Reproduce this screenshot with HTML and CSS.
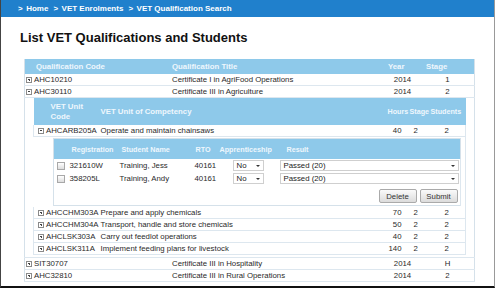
FILE: index.html
```html
<!DOCTYPE html>
<html>
<head>
<title>List VET Qualifications and Students</title>
<link rel="stylesheet" href="styles.css">
</head>
<body>
<div class="frame">

<div class="crumbs"><span class="sep first">&gt;</span>Home<span class="sep">&gt;</span>VET Enrolments<span class="sep">&gt;</span>VET Qualification Search</div>

<h1>List VET Qualifications and Students</h1>

<table class="quals">
  <tr>
    <th class="qCode">Qualification Code</th>
    <th class="qTitle">Qualification Title</th>
    <th class="qYear">Year</th>
    <th class="qStage">Stage</th>
  </tr>
  <tr>
    <td class="code"><span class="tg plus"></span>AHC10210</td>
    <td class="title">Certificate I in AgriFood Operations</td>
    <td class="mid">2014</td>
    <td class="mid">1</td>
  </tr>
  <tr>
    <td class="code"><span class="tg"></span>AHC30110</td>
    <td class="title">Certificate III in Agriculture</td>
    <td class="mid">2014</td>
    <td class="mid">2</td>
  </tr>
  <tr>
    <td class="open" colspan="4">

      <table class="units">
        <tr>
          <th class="uCode">VET Unit<br>Code</th>
          <th class="uName">VET Unit of Competency</th>
          <th class="uHours">Hours</th>
          <th class="uStage">Stage</th>
          <th class="uStudents">Students</th>
        </tr>
        <tr>
          <td class="code"><span class="tg"></span>AHCARB205A</td>
          <td>Operate and maintain chainsaws</td>
          <td class="hours">40</td>
          <td class="stage">2</td>
          <td class="mid">2</td>
        </tr>
        <tr>
          <td class="students" colspan="5">

            <table class="stud">
              <tr>
                <th class="sCheck"></th>
                <th class="sReg">Registration</th>
                <th class="sName">Student Name</th>
                <th class="sRto">RTO</th>
                <th class="sApp">Apprenticeship</th>
                <th class="sResult">Result</th>
              </tr>
              <tr>
                <td><span class="check"></span></td>
                <td class="reg">321610W</td>
                <td class="reg">Training, Jess</td>
                <td class="rto">40161</td>
                <td><div class="sel selNo">No</div></td>
                <td><div class="sel selResult">Passed (20)</div></td>
              </tr>
              <tr>
                <td><span class="check"></span></td>
                <td class="reg">358205L</td>
                <td class="reg">Training, Andy</td>
                <td class="rto">40161</td>
                <td><div class="sel selNo">No</div></td>
                <td><div class="sel selResult">Passed (20)</div></td>
              </tr>
              <tr>
                <td class="actions" colspan="6">
                  <div class="btns">
                    <button type="button">Delete</button>
                    <button type="button">Submit</button>
                  </div>
                </td>
              </tr>
            </table>

          </td>
        </tr>
        <tr>
          <td class="code"><span class="tg plus"></span>AHCCHM303A</td>
          <td>Prepare and apply chemicals</td>
          <td class="hours">70</td>
          <td class="stage">2</td>
          <td class="mid">2</td>
        </tr>
        <tr>
          <td class="code"><span class="tg plus"></span>AHCCHM304A</td>
          <td>Transport, handle and store chemicals</td>
          <td class="hours">50</td>
          <td class="stage">2</td>
          <td class="mid">2</td>
        </tr>
        <tr>
          <td class="code"><span class="tg plus"></span>AHCLSK303A</td>
          <td>Carry out feedlot operations</td>
          <td class="hours">40</td>
          <td class="stage">2</td>
          <td class="mid">2</td>
        </tr>
        <tr>
          <td class="code"><span class="tg plus"></span>AHCLSK311A</td>
          <td>Implement feeding plans for livestock</td>
          <td class="hours">140</td>
          <td class="stage">2</td>
          <td class="mid">2</td>
        </tr>
      </table>

    </td>
  </tr>
  <tr>
    <td class="code"><span class="tg plus"></span>SIT30707</td>
    <td class="title">Certificate III in Hospitality</td>
    <td class="mid">2014</td>
    <td class="mid">H</td>
  </tr>
  <tr>
    <td class="code"><span class="tg plus"></span>AHC32810</td>
    <td class="title">Certificate III in Rural Operations</td>
    <td class="mid">2014</td>
    <td class="mid">2</td>
  </tr>
</table>

</div>
</body>
</html>
```

FILE: styles.css
```css
body {
  margin: 0;
  font-family: "Liberation Sans", Arial, sans-serif;
  color: #2a2a2a;
}
.frame {
  width: 495px;
  height: 288px;
  box-sizing: border-box;
  border-left: 1px solid #444444;
  border-right: 1px solid #999999;
  border-bottom: 2px solid #111111;
  overflow: hidden;
}
.crumbs {
  height: 17px;
  line-height: 17px;
  padding-left: 17px;
  background-color: #2080cc;
  color: #FFFFFF;
  font-size: 8px;
  font-weight: bold;
  white-space: nowrap;
}
.crumbs .sep {
  margin: 0 3.5px 0 5px;
}
.crumbs .first {
  margin-left: 0;
}
h1 {
  margin: 13px 0 14px 19px;
  font-size: 13px;
  line-height: 15px;
  color: #111111;
}

/* tables */
table {
  border-collapse: collapse;
  table-layout: fixed;
  font-size: 7.8px;
}
th {
  padding: 0;
  background-color: #8ec9ea;
  color: #eef7fd;
  font-weight: bold;
  text-align: left;
  white-space: nowrap;
}
td {
  padding: 0;
  line-height: 11px;
  white-space: nowrap;
  border-bottom: 1px solid #dde7ef;
}
.mid {
  text-align: center;
}

.quals {
  width: 449px;
  margin-left: 23px;
  border-left: 1px solid #d5e1ea;
  border-right: 1px solid #d5e1ea;
}
.quals th {
  height: 15px;
}
.qCode { width: 130px; padding-left: 11px; }
.qTitle { width: 212px; padding-left: 6px; }
.qYear { width: 33px; padding-left: 4px; }
.qStage { width: 48px; padding-left: 5px; }
.quals .code {
  padding-left: 1px;
}
.quals .title {
  padding-left: 6px;
}
.open {
  padding: 0 7px 2px 8px;
}

/* toggle boxes */
.tg {
  display: inline-block;
  width: 4px;
  height: 4px;
  margin-right: 2px;
  vertical-align: -0.5px;
  border: 1px solid #8a8a8a;
  background: linear-gradient(#444444, #444444) center / 2px 1px no-repeat;
}
.tg.plus {
  background:
    linear-gradient(#444444, #444444) center / 2px 1px no-repeat,
    linear-gradient(#444444, #444444) center / 1px 2px no-repeat;
}

.units {
  width: 432px;
}
.units th {
  padding: 4px 0 3px;
  line-height: 10px;
  font-size: 7.2px;
}
.units .uCode { width: 50px; padding-left: 17px; font-size: 7.8px; }
.units .uName { width: 285px; font-size: 7.8px; }
.units .uHours { width: 20px; padding-left: 2px; }
.units .uStage { width: 19px; padding-left: 2px; }
.units .uStudents { width: 35px; padding-left: 2px; }
.units .code {
  padding-left: 4px;
  border-left: 1px solid #dde7ef;
}
.units td:last-child {
  border-right: 1px solid #dde7ef;
}
.hours {
  text-align: right;
  padding-right: 6px;
}
.stage {
  padding-left: 6px;
}
.units .students {
  padding: 1px 7px 1px 19px;
  border: 0;
}

/* students */
.stud {
  width: 406px;
  border: 1px solid #d5e1ea;
}
.stud th {
  height: 13px;
}
.stud td {
  height: 13px;
  line-height: 11px;
  border: 0;
}
.stud .sCheck { width: 15px; }
.stud .sReg { width: 47px; padding-left: 3px; }
.stud .sName { width: 71px; padding-left: 3px; }
.stud .sRto { width: 22px; padding-left: 3px; }
.stud .sApp { width: 60px; padding-left: 2px; }
.stud .sResult { width: 173px; padding-left: 7px; }
.reg {
  padding-left: 1px;
}
.stud .rto {
  padding-left: 2px;
}
.check {
  display: inline-block;
  width: 6px;
  height: 6px;
  margin-left: 3px;
  vertical-align: middle;
  border: 1px solid #a8a8a8;
  background: linear-gradient(#ffffff, #dddddd);
}
.sel {
  display: flex;
  justify-content: space-between;
  align-items: center;
  box-sizing: border-box;
  height: 11px;
  padding-left: 3px;
  border: 1px solid #cfcfcf;
  background-color: #FFFFFF;
  color: #222222;
}
.sel::after {
  content: "";
  margin-right: 3px;
  border-left: 2px solid transparent;
  border-right: 2px solid transparent;
  border-top: 2px solid #333333;
}
.selNo {
  width: 31px;
  margin-left: 15px;
}
.selResult {
  width: 179px;
}
.stud .actions {
  height: auto;
}
.btns {
  display: flex;
  justify-content: flex-end;
  gap: 3px;
  padding: 4px 2px 2px 0;
}
button {
  width: 38px;
  height: 14px;
  padding: 0;
  border: 1px solid #aaaaaa;
  border-radius: 2px;
  background: linear-gradient(#fafafa, #dcdcdc);
  color: #333333;
  font-family: "Liberation Sans", Arial, sans-serif;
  font-size: 7.8px;
}
```
